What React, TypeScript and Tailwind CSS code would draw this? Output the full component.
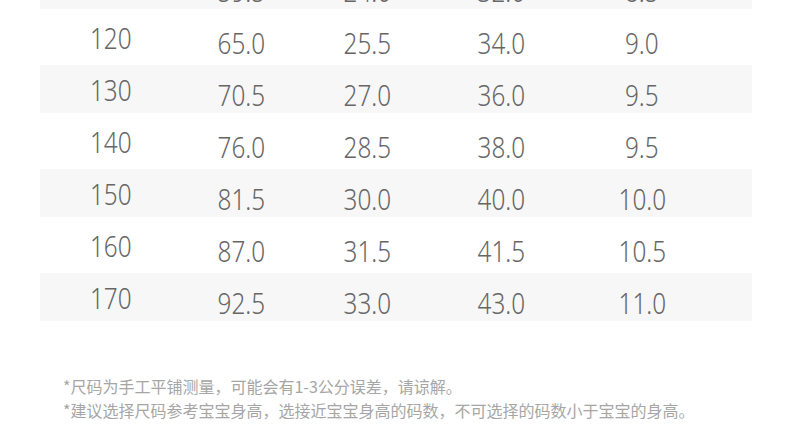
const rows = [
  ['110', '59.5', '24.0', '32.0', '8.5'],
  ['120', '65.0', '25.5', '34.0', '9.0'],
  ['130', '70.5', '27.0', '36.0', '9.5'],
  ['140', '76.0', '28.5', '38.0', '9.5'],
  ['150', '81.5', '30.0', '40.0', '10.0'],
  ['160', '87.0', '31.5', '41.5', '10.5'],
  ['170', '92.5', '33.0', '43.0', '11.0'],
]

function Row({ cells, shaded, first }: { cells: string[]; shaded: boolean; first?: boolean }) {
  return (
    <div
      className={
        'grid grid-cols-[142px_118px_134px_134px_148px_1fr] items-center ' +
        (shaded ? 'h-[48px] bg-[#f7f7f7]' : 'h-[56px]') +
        (first ? ' -mt-[39px]' : '')
      }
    >
      {cells.map((c, i) => (
        <div
          key={i}
          className={
            'text-center text-[30px] font-light leading-none text-[#666666] ' +
            (i === 0 ? 'pt-[2px]' : 'pt-[11px]')
          }
        >
          <span className="inline-block scale-x-[0.81]">{c}</span>
        </div>
      ))}
      <div />
    </div>
  )
}

export default function App() {
  return (
    <div
      className="w-[790px] h-[446px] overflow-hidden bg-white"
      style={{ fontFamily: '"Noto Sans", "Noto Sans CJK SC", sans-serif' }}
    >
      <div className="mx-[40px] w-[712px]">
        {rows.map((r, i) => (
          <Row key={r[0]} cells={r} shaded={i % 2 === 0} first={i === 0} />
        ))}
      </div>

      <div
        className="mt-[53px] pl-[63px] text-[16px] leading-[24px] text-[#a6a6a6]"
        style={{ fontFamily: '"Noto Sans CJK SC", "Noto Sans", sans-serif' }}
      >
        <p>*尺码为手工平铺测量，可能会有1-3公分误差，请谅解。</p>
        <p>*建议选择尺码参考宝宝身高，选接近宝宝身高的码数，不可选择的码数小于宝宝的身高。</p>
      </div>
    </div>
  )
}
